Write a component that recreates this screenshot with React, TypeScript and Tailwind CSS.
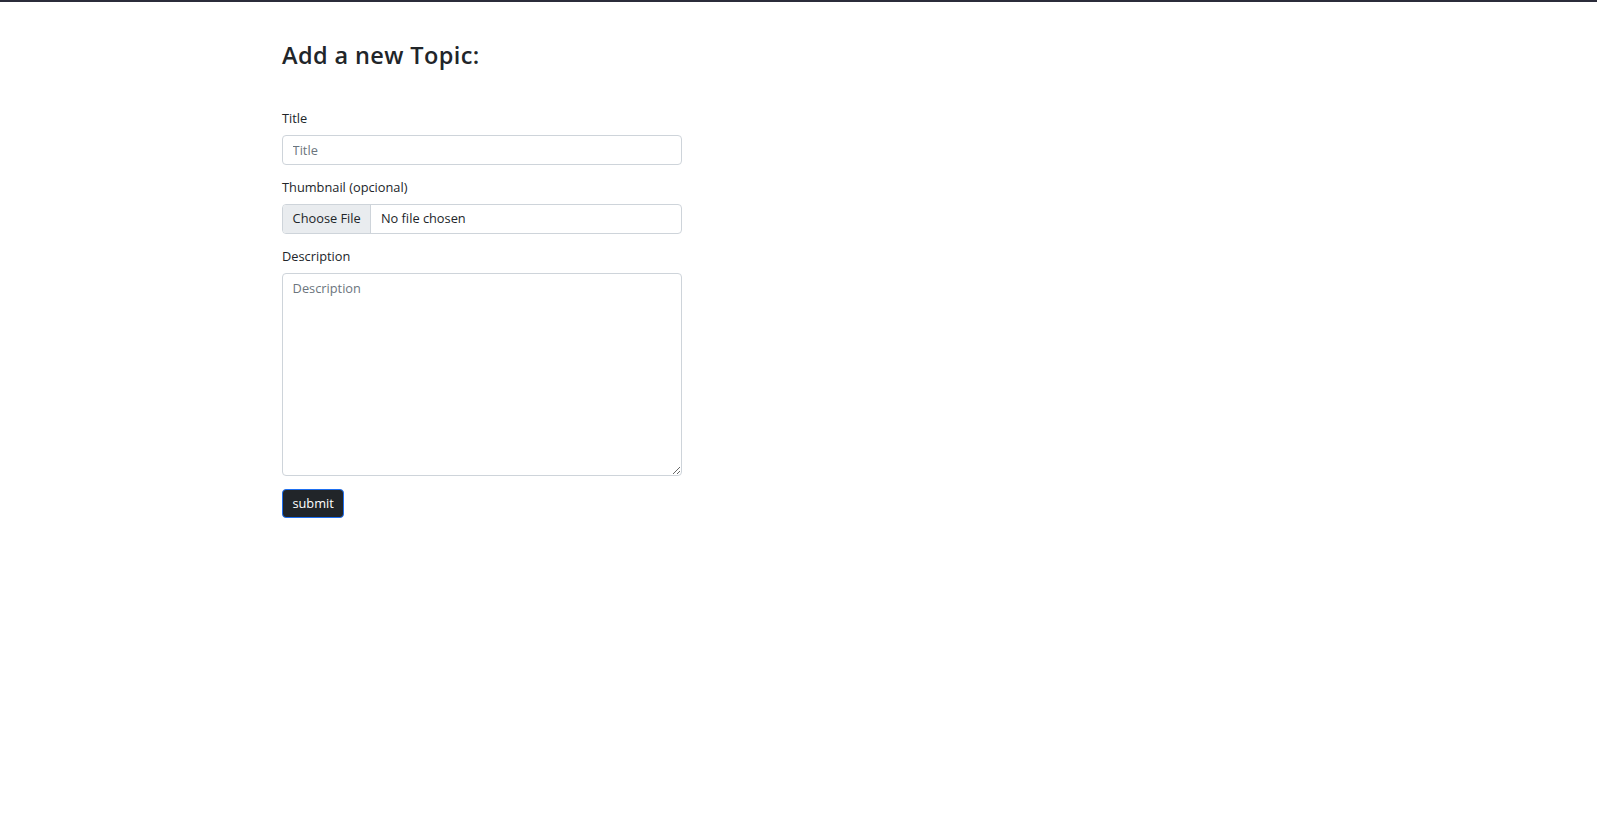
import React from 'react'

const font = { fontFamily: '"Open Sans", "Noto Sans", sans-serif' }

export default function App(): React.JSX.Element {
  return (
    <div className="min-h-screen bg-white text-[#212529]" style={font}>
      <div className="h-[2px] w-full bg-[#2b2c3a]" />
      <div className="ml-[282px] w-[400px] pt-[39px]">
        <h3 className="mb-[40px] text-[23.5px] font-semibold leading-[1.2] tracking-[0.4px]">
          Add a new Topic:
        </h3>
        <form onSubmit={(e) => e.preventDefault()}>
          <div className="mb-[13px]">
            <label className="mb-[6.4px] block text-[12.8px] leading-[1.5]">Title</label>
            <input
              type="text"
              placeholder="Title"
              className="block h-[30.4px] w-full rounded-[4px] border border-[#ced4da] px-[9.6px] text-[12.8px] text-[#212529] placeholder:text-[#6c757d] focus:outline-none"
            />
          </div>
          <div className="mb-[13px]">
            <label className="mb-[6.4px] block text-[12.8px] leading-[1.5]">Thumbnail (opcional)</label>
            <div className="flex h-[30.4px] w-full overflow-hidden rounded-[4px] border border-[#ced4da] text-[12.8px]">
              <span className="flex items-center border-r border-[#ced4da] bg-[#e9ecef] px-[9.6px]">
                Choose File
              </span>
              <span className="flex items-center px-[9.6px]">No file chosen</span>
            </div>
          </div>
          <div className="mb-[13px]">
            <label className="mb-[6.4px] block text-[12.8px] leading-[1.5]">Description</label>
            <textarea
              placeholder="Description"
              className="block h-[203px] w-full rounded-[4px] border border-[#ced4da] px-[9.6px] py-[4.8px] text-[12.8px] leading-[1.5] text-[#212529] placeholder:text-[#6c757d] focus:outline-none"
            />
          </div>
          <button
            type="submit"
            className="h-[29.6px] rounded-[4px] border border-[#1e6ff0] bg-[#212529] px-[9.4px] text-[12.8px] leading-[1.5] text-white"
          >
            submit
          </button>
        </form>
      </div>
    </div>
  )
}
